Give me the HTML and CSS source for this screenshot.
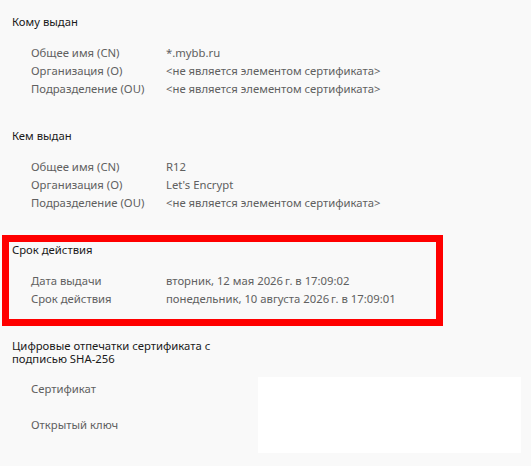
FILE: index.html
```html
<!DOCTYPE html>
<html lang="ru">
<head>
<meta charset="utf-8">
<title>Сертификат</title>
<link rel="stylesheet" href="styles.css">
</head>
<body>
<div class="page">
  <section class="section">
    <div class="heading">Кому выдан</div>
    <div class="rows">
      <div class="label">Общее имя (CN)</div><div class="value">*.mybb.ru</div>
      <div class="label">Организация (O)</div><div class="value">&lt;не является элементом сертификата&gt;</div>
      <div class="label">Подразделение (OU)</div><div class="value">&lt;не является элементом сертификата&gt;</div>
    </div>
  </section>
  <section class="section">
    <div class="heading">Кем выдан</div>
    <div class="rows">
      <div class="label">Общее имя (CN)</div><div class="value">R12</div>
      <div class="label">Организация (O)</div><div class="value">Let's Encrypt</div>
      <div class="label">Подразделение (OU)</div><div class="value">&lt;не является элементом сертификата&gt;</div>
    </div>
  </section>
  <section class="section highlight">
    <div class="heading">Срок действия</div>
    <div class="rows">
      <div class="label">Дата выдачи</div><div class="value">вторник, 12 мая 2026&#8239;г. в 17:09:02</div>
      <div class="label">Срок действия</div><div class="value">понедельник, 10 августа 2026&#8239;г. в 17:09:01</div>
    </div>
  </section>
  <section class="section fingerprints">
    <div class="heading wrap">Цифровые отпечатки сертификата с подписью SHA-256</div>
    <div class="fp-grid">
      <div class="label fp-label1">Сертификат</div>
      <div class="fp-box"></div>
      <div class="label fp-label2">Открытый ключ</div>
    </div>
  </section>
</div>
</body>
</html>
```
FILE: styles.css
```css
html, body {
  margin: 0;
  padding: 0;
  background: #f9f9f9;
}
body {
  font-family: "Noto Sans", "Open Sans", sans-serif;
  font-size: 11.3px;
  color: #1a1a1a;
}
.page {
  padding: 14px 0 0 12px;
}
.section {
  margin-bottom: 30px;
}
.heading {
  line-height: 16px;
  color: #1a1a1a;
}
.rows {
  display: grid;
  grid-template-columns: 135px auto;
  margin-top: 14px;
  padding-left: 19px;
  line-height: 18px;
  color: #606060;
}
.label, .value {
  white-space: nowrap;
}
.highlight {
  box-sizing: border-box;
  width: 441px;
  margin: -7px 0 0 -10px;
  padding: 0 0 11px 3px;
  border: 7px solid #ff0000;
}
.fingerprints {
  margin-top: 13px;
  margin-bottom: 0;
}
.heading.wrap {
  line-height: 13px;
  max-width: 215px;
}
.fp-grid {
  display: grid;
  grid-template-columns: 227px 263px;
  grid-template-rows: auto auto;
  margin-top: 12px;
  padding-left: 19px;
  line-height: 18px;
  color: #606060;
}
.fp-label1 {
  grid-column: 1;
  grid-row: 1;
  margin-top: 3px;
}
.fp-label2 {
  grid-column: 1;
  grid-row: 2;
  margin-top: 18px;
  margin-bottom: 19px;
}
.fp-box {
  grid-column: 2;
  grid-row: 1 / 3;
  background: #ffffff;
}
```
